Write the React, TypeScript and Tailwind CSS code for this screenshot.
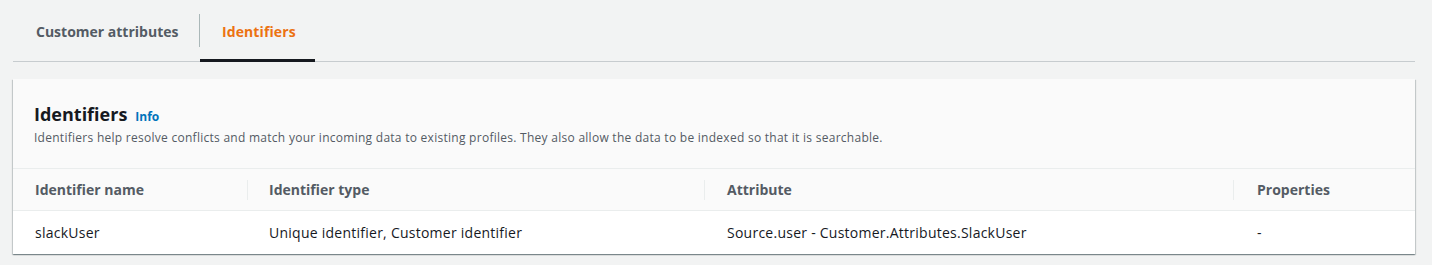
import React from "react";

const font = { fontFamily: '"Open Sans", "Liberation Sans", sans-serif' };

export default function App() {
  const cols = [
    { name: "Identifier name", w: "w-[233px]", pad: "pl-[21px]" },
    { name: "Identifier type", w: "w-[457px]", pad: "pl-[21px]" },
    { name: "Attribute", w: "w-[529px]", pad: "pl-[22px]" },
    { name: "Properties", w: "flex-1", pad: "pl-[23px]" },
  ];
  const row = ["slackUser", "Unique identifier, Customer identifier", "Source.user - Customer.Attributes.SlackUser", "-"];
  return (
    <div className="w-[1432px] h-[265px] bg-[#f2f3f3] pt-[2px]" style={font}>
      <div className="ml-[13px] mr-[17px] flex items-stretch border-b border-[#c7cccf] h-[60px]">
        <div className="w-[186px] flex items-center pl-[23px] text-[14px] font-bold text-[#545b64]">
          Customer attributes
        </div>
        <div className="flex items-start pt-[12px]">
          <div className="w-px h-[33px] bg-[#aab7b8]" />
        </div>
        <div className="relative flex items-center pl-[22px] text-[14px] font-bold text-[#ec7211] w-[115px] tracking-[0.1px]">
          Identifiers
          <div className="absolute left-0 right-0 bottom-[-1px] h-[3px] bg-[#16191f]" />
        </div>
      </div>
      <div className="ml-[13px] mr-[17px] mt-[17px] bg-white shadow-[0_1px_1px_0_rgba(0,28,36,0.3),1px_1px_1px_0_rgba(0,28,36,0.15),-1px_1px_1px_0_rgba(0,28,36,0.15)]">
        <div className="bg-[#fafafa] px-[21px] pt-[23px] pb-[20px] border-b border-[#eaeded]">
          <div className="flex items-baseline gap-[8px]">
            <span className="text-[18px] font-bold text-[#16191f] leading-[24px]">Identifiers</span>
            <span className="text-[12px] font-bold text-[#0073bb]">Info</span>
          </div>
          <div className="text-[12px] text-[#545b64] leading-[20px] mt-[2px] tracking-[0.27px]">
            Identifiers help resolve conflicts and match your incoming data to existing profiles. They also allow the data to be indexed so that it is searchable.
          </div>
        </div>
        <div className="bg-[#fafafa] flex h-[42px] border-b border-[#eaeded] pl-[1px]">
          {cols.map((c, i) => (
            <div key={c.name} className={`${c.w} flex items-center`}>
              {i > 0 && <div className="w-px h-[20px] bg-[#eaeded]" />}
              <span className={`${c.pad} text-[14px] font-bold text-[#545b64]`}>{c.name}</span>
            </div>
          ))}
        </div>
        <div className="flex h-[43px] pl-[1px]">
          {cols.map((c, i) => (
            <div key={c.name} className={`${c.w} flex items-center`}>
              {i > 0 && <div className="w-px" />}
              <span className={`${c.pad} text-[14px] text-[#16191f] tracking-[0.25px]`}>{row[i]}</span>
            </div>
          ))}
        </div>
      </div>
    </div>
  );
}
